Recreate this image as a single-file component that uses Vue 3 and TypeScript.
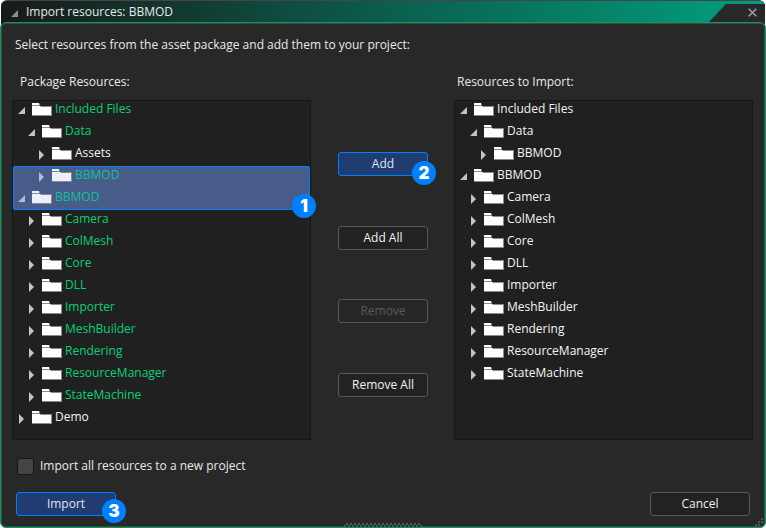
<script setup lang="ts">
import { ref } from 'vue'

interface TreeRow {
  name: string
  level: number
  open?: boolean
  used?: boolean
  selected?: 'first' | 'last'
}

const packageRows: TreeRow[] = [
  { name: 'Included Files', level: 0, open: true, used: true },
  { name: 'Data', level: 1, open: true, used: true },
  { name: 'Assets', level: 2 },
  { name: 'BBMOD', level: 2, used: true, selected: 'first' },
  { name: 'BBMOD', level: 0, open: true, used: true, selected: 'last' },
  { name: 'Camera', level: 1, used: true },
  { name: 'ColMesh', level: 1, used: true },
  { name: 'Core', level: 1, used: true },
  { name: 'DLL', level: 1, used: true },
  { name: 'Importer', level: 1, used: true },
  { name: 'MeshBuilder', level: 1, used: true },
  { name: 'Rendering', level: 1, used: true },
  { name: 'ResourceManager', level: 1, used: true },
  { name: 'StateMachine', level: 1, used: true },
  { name: 'Demo', level: 0 },
]

const importRows: TreeRow[] = [
  { name: 'Included Files', level: 0, open: true },
  { name: 'Data', level: 1, open: true },
  { name: 'BBMOD', level: 2 },
  { name: 'BBMOD', level: 0, open: true },
  { name: 'Camera', level: 1 },
  { name: 'ColMesh', level: 1 },
  { name: 'Core', level: 1 },
  { name: 'DLL', level: 1 },
  { name: 'Importer', level: 1 },
  { name: 'MeshBuilder', level: 1 },
  { name: 'Rendering', level: 1 },
  { name: 'ResourceManager', level: 1 },
  { name: 'StateMachine', level: 1 },
]

const panels = [
  { id: 'package', title: 'Package Resources:', rows: packageRows },
  { id: 'import', title: 'Resources to Import:', rows: importRows },
]

const newProject = ref(false)
</script>

<template>
  <main class="dialog">
    <header class="titlebar">
      <svg class="title-arrow" viewBox="0 0 7 7" aria-hidden="true"><path d="M7 0V7H0Z" /></svg>
      <h1 class="title">Import resources: BBMOD</h1>
      <button class="close" type="button" aria-label="Close">
        <svg class="close-icon" viewBox="0 0 9 9" aria-hidden="true"><path d="M.7.7 8.3 8.3M8.3.7.7 8.3" /></svg>
      </button>
    </header>

    <div class="body">
      <p class="intro">Select resources from the asset package and add them to your project:</p>

      <div class="columns">
        <section v-for="panel in panels" :key="panel.id" class="panel" :class="panel.id">
          <h2 class="panel-title">{{ panel.title }}</h2>
          <ul class="tree">
            <li
              v-for="(row, index) in panel.rows"
              :key="index"
              class="row"
              :class="[`level-${row.level}`, { used: row.used, selected: row.selected }, row.selected]"
            >
              <svg class="arrow" viewBox="0 0 8 10" aria-hidden="true">
                <path v-if="row.open" d="M7 1V8H0Z" />
                <path v-else d="M1 0 6 5 1 10Z" />
              </svg>
              <svg class="folder" viewBox="0 0 20 13" aria-hidden="true">
                <path class="folder-shade" d="M0 0H7L8 1V3H20V13H0Z" />
                <path class="folder-face" d="M0 0H7V2H0ZM0 3H8L9 4H19V12H0Z" />
              </svg>
              <span class="name">{{ row.name }}</span>
              <span v-if="row.selected === 'last'" class="badge">1</span>
            </li>
          </ul>
        </section>

        <div class="actions">
          <span class="anchor">
            <button class="btn primary" type="button">Add</button>
            <span class="badge">2</span>
          </span>
          <button class="btn" type="button">Add All</button>
          <button class="btn" type="button" disabled>Remove</button>
          <button class="btn" type="button">Remove All</button>
        </div>
      </div>

      <label class="option">
        <input v-model="newProject" class="check" type="checkbox" />
        <span>Import all resources to a new project</span>
      </label>

      <footer class="footer">
        <span class="anchor wide">
          <button class="btn primary" type="button">Import</button>
          <span class="badge">3</span>
        </span>
        <button class="btn wide" type="button">Cancel</button>
      </footer>

      <span class="grip"></span>
      <svg class="corner" viewBox="0 0 8 8" aria-hidden="true">
        <path d="M6 0h2v2h-2zM3 3h2v2h-2zM6 3h2v2h-2zM0 6h2v2h-2zM3 6h2v2h-2z" />
      </svg>
    </div>
  </main>
</template>

<style>
body {
  background: #fff;
}
</style>

<style scoped>
.dialog {
  box-sizing: border-box;
  display: flex;
  flex-direction: column;
  min-height: 100vh;
  font: 12px/18px "Open Sans", "Noto Sans", sans-serif;
  color: #e8e8e8;
}

.titlebar {
  box-sizing: border-box;
  display: flex;
  align-items: center;
  height: 26px;
  margin: 0 1px -4px;
  padding: 0 0 3px 10px;
  border-top: 1px solid #454545;
  border-radius: 6px 6px 0 0;
  background: linear-gradient(90deg, #171a19, #00a07f);
}

.title-arrow {
  width: 7px;
  height: 7px;
  margin-top: 2px;
  fill: #8a90a0;
}

.title {
  flex: 1;
  margin: 0 0 0 8px;
  font: inherit;
}

.close {
  display: flex;
  align-items: center;
  justify-content: flex-end;
  width: 56px;
  height: 22px;
  margin-top: 3px;
  margin-bottom: -3px;
  padding: 0 8px 5px 0;
  border: 0;
  background: #282828;
  clip-path: polygon(17px 0, 100% 0, 100% 100%, 0 100%, 0 18px);
}

.close-icon {
  width: 9px;
  height: 9px;
  fill: none;
  stroke: #9a9eac;
  stroke-width: 1.5;
}

.body {
  position: relative;
  flex: 1;
  display: flex;
  flex-direction: column;
  padding: 13px 12px 11px 11px;
  border: 1px solid #00a05c;
  border-radius: 6px;
  background: #282828;
  box-shadow: inset 0 0 0 1px #454545;
}

.intro {
  margin: 0 0 19px 3px;
}

.columns {
  flex: 1;
  display: grid;
  grid-template-columns: 1fr 91px 1fr;
  column-gap: 26px;
}

.panel {
  display: flex;
  flex-direction: column;
  grid-row: 1;
}

.panel.package {
  grid-column: 1;
}

.panel.import {
  grid-column: 3;
}

.panel-title {
  margin: 0 0 9px;
  padding-left: 8px;
  font: inherit;
}

.import .panel-title {
  padding-left: 3px;
}

.tree {
  flex: 1;
  margin: 0;
  padding: 0;
  list-style: none;
  border-radius: 2px;
  background: #202020;
  box-shadow: inset 0 0 0 1px #161616;
}

.row {
  position: relative;
  box-sizing: border-box;
  display: flex;
  align-items: flex-start;
  height: 22px;
  padding-left: 6px;
  color: #f4f4f4;
}

.level-1 {
  padding-left: 16px;
}

.level-2 {
  padding-left: 26px;
}

.arrow {
  width: 8px;
  height: 10px;
  margin-top: 6px;
  fill: #c4c4c4;
}

.folder {
  width: 20px;
  height: 13px;
  margin: 3px 3px 0 6px;
}

.folder-shade {
  fill: #8a8a8a;
}

.folder-face {
  fill: #fff;
}

.used {
  color: #08d077;
}

.selected {
  margin: 0 1px;
  padding-left: 5px;
  background: #485c89;
  color: #10c098;
}

.selected.level-2 {
  padding-left: 25px;
}

.first {
  border-radius: 3px 3px 0 0;
  box-shadow: inset 1px 1px #0080ff, inset -1px 0 #0080ff;
}

.last {
  border-radius: 0 0 3px 3px;
  box-shadow: inset 1px -1px #0080ff, inset -1px 0 #0080ff;
}

.selected .arrow {
  fill: #b4bad4;
}

.selected .folder-face {
  fill: #eceffe;
}

.badge {
  position: absolute;
  right: -8px;
  bottom: -9px;
  z-index: 1;
  width: 24px;
  height: 24px;
  border-radius: 50%;
  background: #0080ff;
  color: #fff;
  font: 900 17px/24px Inter, sans-serif;
  text-align: center;
}

.selected .badge {
  right: -6px;
  bottom: -8px;
}

.actions {
  grid-column: 2;
  grid-row: 1;
  display: flex;
  flex-direction: column;
  justify-content: space-between;
  padding: 79px 0 43px 1px;
}

.anchor {
  position: relative;
  display: flex;
}

.btn {
  width: 100%;
  height: 24px;
  padding: 0;
  border: 1px solid #585858;
  border-radius: 3px;
  background: #222;
  color: #f0f0f0;
  font: inherit;
}

.btn.primary {
  border-color: #0080ff;
  background: #213c71;
  color: #e0e4f0;
}

.btn:disabled {
  background: #262626;
  color: #5a5a5a;
}

.btn.wide,
.wide {
  width: 100px;
}

.option {
  display: flex;
  align-items: center;
  gap: 6px;
  align-self: flex-start;
  margin: 17px 0 17px 5px;
}

.check {
  appearance: none;
  box-sizing: border-box;
  width: 17px;
  height: 17px;
  margin: 0;
  border: 1px solid #161616;
  border-radius: 3px;
  background: #434545;
}

.check:checked {
  background: #0080ff;
}

.footer {
  display: flex;
  justify-content: space-between;
  padding: 0 3px 0 4px;
}

.footer .badge {
  right: -10px;
  bottom: -7px;
}

.grip {
  position: absolute;
  left: 50%;
  bottom: 0;
  width: 78px;
  height: 4px;
  margin-left: -39px;
  background: repeating-conic-gradient(#585858 0 25%, #282828 0 50%) 0 0 / 4px 4px;
}

.corner {
  position: absolute;
  right: 2px;
  bottom: 1px;
  width: 8px;
  height: 8px;
  fill: #555;
}
</style>
